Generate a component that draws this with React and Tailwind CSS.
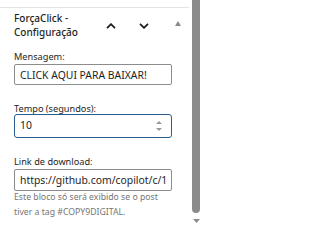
import React from 'react'

const font = { fontFamily: '"Noto Sans", "Open Sans", sans-serif' }

const Chevron = ({ up }) => (
  <svg width="10" height="6" viewBox="0 0 10 6" fill="none" stroke="#1e1e1e" strokeWidth="1.8">
    {up ? <path d="M1 5.2 L5 1.2 L9 5.2" /> : <path d="M1 0.8 L5 4.8 L9 0.8" />}
  </svg>
)

const Tri = ({ down, w = 6, h = 4, color = '#8a8a8a' }) => (
  <svg width={w} height={h} viewBox={`0 0 ${w} ${h}`}>
    {down ? (
      <polygon points={`0,0 ${w},0 ${w / 2},${h}`} fill={color} />
    ) : (
      <polygon points={`0,${h} ${w},${h} ${w / 2},0`} fill={color} />
    )}
  </svg>
)

const Field = ({ label, children, className = '' }) => (
  <div className={className}>
    <div className="text-[9.2px] leading-[9px] text-[#1e1e1e] whitespace-nowrap">{label}</div>
    {children}
  </div>
)

export default function App() {
  return (
    <div className="w-[202px] h-[226px] bg-white flex overflow-hidden" style={font}>
      <div className="w-[192px] flex flex-col">
        <div className="h-[7px]" />
        <div className="border-t border-[#e4e4e4] mr-[3px]" />
        {/* panel header */}
        <div className="flex items-center pl-[14px] pt-[3px]">
          <div className="w-[86px] text-[10px] leading-[14px] font-medium text-[#1e1e1e]">
            ForçaClick -<br />Configuração
          </div>
          <div className="ml-[6px] mt-[1px] flex"><Chevron up /></div>
          <div className="ml-[23px] mt-[1px] flex"><Chevron /></div>
          <div className="ml-[26px] mb-[3px] flex"><Tri w={6} h={5} /></div>
        </div>

        <div className="pl-[14px] pr-[20px] flex flex-col">
          <Field label="Mensagem:" className="mt-[13px]">
            <input
              readOnly
              value="CLICK AQUI PARA BAIXAR!"
              className="mt-[1px] w-full h-[21px] border border-[#8c8c8c] rounded-[2px] pt-[2px] px-[5px] text-[10.4px] text-[#1e1e1e] bg-white outline-none"
              style={font}
            />
          </Field>

          <Field label="Tempo (segundos):" className="mt-[19px]">
            <div className="mt-[1px] h-[24px] border-[1.5px] border-[#2a5d8f] rounded-[3px] flex items-center pl-[5px] pr-[9px] text-[10.4px] text-[#1e1e1e]">
              <span className="flex-1">10</span>
              <div className="flex flex-col gap-[4px]">
                <Tri w={6} h={3} color="#9a9a9a" />
                <Tri down w={6} h={3} color="#9a9a9a" />
              </div>
            </div>
          </Field>

          <Field label="Link de download:" className="mt-[19px]">
            <input
              readOnly
              value="https://github.com/copilot/c/1b7e2f"
              className="mt-[1px] w-full h-[22px] border border-[#8c8c8c] rounded-[2px] px-[5px] text-[10.4px] text-[#1e1e1e] bg-white outline-none"
              style={font}
            />
          </Field>

          <p className="mt-[-1px] text-[8.7px] leading-[15px] text-[#757575]">
            Este bloco só será exibido se o post tiver a tag #COPY9DIGITAL.
          </p>
        </div>
      </div>

      {/* scrollbar */}
      <div className="w-[10px] bg-white flex flex-col">
        <div className="w-[8px] h-[213px] bg-[#8b8b8b] rounded-b-[4px]" />
        <div className="mt-[6px] ml-[1px] flex"><Tri down w={7} h={4} color="#8b8b8b" /></div>
      </div>
    </div>
  )
}
